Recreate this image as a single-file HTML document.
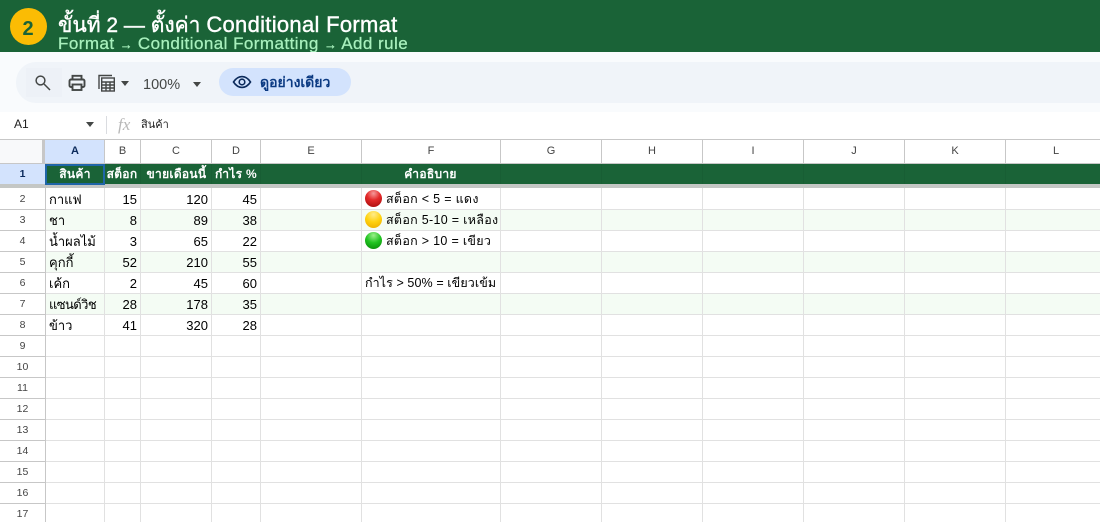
<!DOCTYPE html>
<html lang="th"><head><meta charset="utf-8"><title>Conditional Format</title>
<style>
*{box-sizing:border-box}
html,body{margin:0;padding:0;width:1100px;height:522px;overflow:hidden;background:#fff;font-family:"Liberation Sans","Noto Sans CJK SC",sans-serif}
.a{position:absolute;white-space:nowrap}
.v{position:absolute;width:1px;background:#e1e1e1;top:188px;height:334px}
.h{position:absolute;left:45px;width:1055px;height:1px;background:#e1e1e1}
.rl{position:absolute;left:0;width:45px;height:1px;background:#c7c7c7}
.cv{position:absolute;top:139px;height:25px;width:1px;background:#c7c7c7}
.gv{position:absolute;top:164px;height:20px;width:1px;background:#185e34}
.ch{position:absolute;top:140px;height:23px;line-height:23px;text-align:center;font-size:11px;color:#444;padding-left:1px}
.rn{position:absolute;left:0;width:45px;text-align:center;font-size:10.5px;color:#444;height:21px;line-height:22px}
.g{position:absolute;left:45px;width:1055px;height:20px;background:#f4fcf4}
.t{position:absolute;font-size:13px;color:#000;height:20px;line-height:21px;white-space:nowrap}
.r{text-align:right}
.hd{position:absolute;top:164px;height:20px;line-height:20px;font-size:12px;font-weight:bold;color:#fff;text-align:center;white-space:nowrap;letter-spacing:.3px}
.dot{position:absolute;left:365px;width:17px;height:17px;border-radius:50%}
</style></head><body>

<div class="a" style="left:0;top:0;width:1100px;height:52px;background:#1a6337"></div>
<div class="a" style="left:10px;top:8px;width:37px;height:37px;border-radius:50%;background:#fbbc04;color:#1a6337;font-size:20px;font-weight:bold;text-align:center;line-height:43px;padding-right:1px">2</div>
<div class="a" style="left:58px;top:10px;font-size:21px;line-height:30px;color:#fff;-webkit-text-stroke:.4px #fff">ขั้นที่ 2 — ตั้งค่า <span style="font-size:22px;letter-spacing:.3px">Conditional Format</span></div>
<div class="a" style="left:58px;top:34px;font-size:17px;line-height:20px;color:#a8f0bd;letter-spacing:.45px;-webkit-text-stroke:.25px #a8f0bd">Format <span style="font-size:13px;letter-spacing:0">→</span> Conditional Formatting <span style="font-size:13px;letter-spacing:0">→</span> Add rule</div>

<div class="a" style="left:0;top:52px;width:1100px;height:60px;background:#f9fbfd"></div>
<div class="a" style="left:16px;top:62px;width:1100px;height:41px;background:#f0f4f9;border-radius:20px 0 0 20px"></div>
<div class="a" style="left:26px;top:68px;width:36px;height:29px;background:#edf1f7"></div>
<svg class="a" style="left:31px;top:71px" width="22" height="22" viewBox="0 0 22 22" fill="none" stroke="#444746" stroke-width="1.500"><circle cx="9.500" cy="9.500" r="4.400"/><path d="M13 13l6 6"/></svg>
<svg class="a" style="left:66px;top:72px" width="22" height="22" viewBox="0 0 22 22" fill="none" stroke="#444746" stroke-width="1.900"><path d="M6.500 7V3.800h9V7"/><rect x="3.500" y="7.500" width="15" height="7.500" rx="1.500"/><rect x="6.500" y="12.500" width="9" height="5.500" fill="#f0f4f9"/></svg>
<svg class="a" style="left:96px;top:72px" width="22" height="22" viewBox="0 0 22 22" fill="none" stroke="#444746" stroke-width="1.400"><path d="M3 17V3.500h13"/><rect x="5.700" y="6" width="12.600" height="13"/><path d="M5.700 10h12.600M5.700 13h12.600M5.700 16h12.600M10 10v9M14 10v9"/></svg>
<div class="a" style="left:121px;top:80.500px;border:4px solid transparent;border-top:5px solid #444746"></div>
<div class="a" style="left:143px;top:76px;font-size:14.500px;line-height:18px;color:#444746">100%</div>
<div class="a" style="left:193px;top:82px;border:4px solid transparent;border-top:5px solid #444746"></div>
<div class="a" style="left:219px;top:68px;width:132px;height:28px;border-radius:14px;background:#d3e3fd"></div>
<svg class="a" style="left:232px;top:72px" width="20" height="20" viewBox="0 0 20 20" fill="none" stroke="#0b2a5b" stroke-width="1.600"><path d="M1.500 10C4 6.200 6.800 4.600 10 4.600S16 6.200 18.500 10C16 13.800 13.200 15.400 10 15.400S4 13.800 1.500 10z"/><circle cx="10" cy="10" r="2.800"/></svg>
<div class="a" style="left:260px;top:73px;font-size:14px;line-height:18px;font-weight:bold;color:#0b3a82">ดูอย่างเดียว</div>

<div class="a" style="left:14px;top:117px;font-size:12px;line-height:15px;color:#1f1f1f">A1</div>
<div class="a" style="left:86px;top:122px;border:4px solid transparent;border-top:5px solid #444746"></div>
<div class="a" style="left:106px;top:116px;width:1px;height:18px;background:#dadce0"></div>
<div class="a" style="left:118px;top:115px;font-family:'Liberation Serif',serif;font-style:italic;font-size:17px;line-height:20px;color:#b8b8b8">fx</div>
<div class="a" style="left:141px;top:117px;font-size:11px;line-height:16px;color:#1f1f1f">สินค้า</div>

<div class="a" style="left:0;top:139px;width:1100px;height:1px;background:#c7c7c7"></div>
<div class="a" style="left:0;top:140px;width:42px;height:23px;background:#f8f9fa"></div>
<div class="a" style="left:45px;top:140px;width:59px;height:23px;background:#d3e3fd"></div>
<div class="a" style="left:0;top:164px;width:45px;height:20px;background:#d3e3fd"></div>
<div class="a" style="left:42px;top:139px;width:3px;height:25px;background:#c7c7c7"></div>
<div class="a" style="left:0;top:163px;width:1100px;height:1px;background:#c7c7c7"></div>
<div class="cv" style="left:104px"></div><div class="cv" style="left:140px"></div><div class="cv" style="left:211px"></div><div class="cv" style="left:260px"></div><div class="cv" style="left:361px"></div><div class="cv" style="left:500px"></div><div class="cv" style="left:601px"></div><div class="cv" style="left:702px"></div><div class="cv" style="left:803px"></div><div class="cv" style="left:904px"></div><div class="cv" style="left:1005px"></div>
<div class="ch" style="left:45px;width:59px;font-weight:bold;color:#0b2a5b">A</div>
<div class="ch" style="left:104px;width:36px">B</div>
<div class="ch" style="left:140px;width:71px">C</div>
<div class="ch" style="left:211px;width:49px">D</div>
<div class="ch" style="left:260px;width:101px">E</div>
<div class="ch" style="left:361px;width:139px">F</div>
<div class="ch" style="left:500px;width:101px">G</div>
<div class="ch" style="left:601px;width:101px">H</div>
<div class="ch" style="left:702px;width:101px">I</div>
<div class="ch" style="left:803px;width:101px">J</div>
<div class="ch" style="left:904px;width:101px">K</div>
<div class="ch" style="left:1005px;width:101px">L</div>

<div class="a" style="left:45px;top:164px;width:1055px;height:20px;background:#1a6337"></div>
<div class="gv" style="left:104px"></div><div class="gv" style="left:140px"></div><div class="gv" style="left:211px"></div><div class="gv" style="left:260px"></div><div class="gv" style="left:361px"></div><div class="gv" style="left:500px"></div><div class="gv" style="left:601px"></div><div class="gv" style="left:702px"></div><div class="gv" style="left:803px"></div><div class="gv" style="left:904px"></div><div class="gv" style="left:1005px"></div>
<div class="a" style="left:0;top:184px;width:1100px;height:4px;background:#c4c7c5"></div>
<div class="a" style="left:45px;top:164px;width:60px;height:21px;border:2px solid #1f66a8"></div>
<div class="hd" style="left:45px;width:60px">สินค้า</div>
<div class="hd" style="left:104px;width:36px">สต็อก</div>
<div class="hd" style="left:140px;width:73px">ขายเดือนนี้</div>
<div class="hd" style="left:211px;width:50px">กำไร %</div>
<div class="hd" style="left:361px;width:139px">คำอธิบาย</div>

<div class="g" style="top:210px"></div><div class="g" style="top:252px"></div><div class="g" style="top:294px"></div>
<div class="h" style="top:209px"></div><div class="h" style="top:230px"></div><div class="h" style="top:251px"></div><div class="h" style="top:272px"></div><div class="h" style="top:293px"></div><div class="h" style="top:314px"></div><div class="h" style="top:335px"></div><div class="h" style="top:356px"></div><div class="h" style="top:377px"></div><div class="h" style="top:398px"></div><div class="h" style="top:419px"></div><div class="h" style="top:440px"></div><div class="h" style="top:461px"></div><div class="h" style="top:482px"></div><div class="h" style="top:503px"></div>
<div class="v" style="left:104px"></div><div class="v" style="left:140px"></div><div class="v" style="left:211px"></div><div class="v" style="left:260px"></div><div class="v" style="left:361px"></div><div class="v" style="left:500px"></div><div class="v" style="left:601px"></div><div class="v" style="left:702px"></div><div class="v" style="left:803px"></div><div class="v" style="left:904px"></div><div class="v" style="left:1005px"></div>
<div class="a" style="left:45px;top:188px;width:1px;height:334px;background:#c7c7c7"></div>
<div class="rl" style="top:209px"></div><div class="rl" style="top:230px"></div><div class="rl" style="top:251px"></div><div class="rl" style="top:272px"></div><div class="rl" style="top:293px"></div><div class="rl" style="top:314px"></div><div class="rl" style="top:335px"></div><div class="rl" style="top:356px"></div><div class="rl" style="top:377px"></div><div class="rl" style="top:398px"></div><div class="rl" style="top:419px"></div><div class="rl" style="top:440px"></div><div class="rl" style="top:461px"></div><div class="rl" style="top:482px"></div><div class="rl" style="top:503px"></div>

<div class="rn" style="top:163px;font-weight:bold;color:#0b2a5b">1</div>
<div class="rn" style="top:188px">2</div><div class="rn" style="top:209px">3</div><div class="rn" style="top:230px">4</div><div class="rn" style="top:251px">5</div><div class="rn" style="top:272px">6</div><div class="rn" style="top:293px">7</div><div class="rn" style="top:314px">8</div><div class="rn" style="top:335px">9</div><div class="rn" style="top:356px">10</div><div class="rn" style="top:377px">11</div><div class="rn" style="top:398px">12</div><div class="rn" style="top:419px">13</div><div class="rn" style="top:440px">14</div><div class="rn" style="top:461px">15</div><div class="rn" style="top:482px">16</div><div class="rn" style="top:503px">17</div>

<div class="t" style="left:49px;top:189px">กาแฟ</div><div class="t r" style="left:104px;width:33px;top:189px">15</div><div class="t r" style="left:140px;width:68px;top:189px">120</div><div class="t r" style="left:211px;width:46px;top:189px">45</div>
<div class="t" style="left:49px;top:210px">ชา</div><div class="t r" style="left:104px;width:33px;top:210px">8</div><div class="t r" style="left:140px;width:68px;top:210px">89</div><div class="t r" style="left:211px;width:46px;top:210px">38</div>
<div class="t" style="left:49px;top:231px">น้ำผลไม้</div><div class="t r" style="left:104px;width:33px;top:231px">3</div><div class="t r" style="left:140px;width:68px;top:231px">65</div><div class="t r" style="left:211px;width:46px;top:231px">22</div>
<div class="t" style="left:49px;top:252px">คุกกี้</div><div class="t r" style="left:104px;width:33px;top:252px">52</div><div class="t r" style="left:140px;width:68px;top:252px">210</div><div class="t r" style="left:211px;width:46px;top:252px">55</div>
<div class="t" style="left:49px;top:273px">เค้ก</div><div class="t r" style="left:104px;width:33px;top:273px">2</div><div class="t r" style="left:140px;width:68px;top:273px">45</div><div class="t r" style="left:211px;width:46px;top:273px">60</div>
<div class="t" style="left:49px;top:294px;letter-spacing:-.6px">แซนด์วิช</div><div class="t r" style="left:104px;width:33px;top:294px">28</div><div class="t r" style="left:140px;width:68px;top:294px">178</div><div class="t r" style="left:211px;width:46px;top:294px">35</div>
<div class="t" style="left:49px;top:315px">ข้าว</div><div class="t r" style="left:104px;width:33px;top:315px">41</div><div class="t r" style="left:140px;width:68px;top:315px">320</div><div class="t r" style="left:211px;width:46px;top:315px">28</div>

<div class="dot" style="top:190px;background:radial-gradient(circle at 50% 20%,#f59a9a 0,#e42a2a 42%,#b01010 85%,#8f0c0c 100%)"></div>
<div class="dot" style="top:211px;background:radial-gradient(circle at 50% 20%,#ffec8a 0,#ffd20f 48%,#f0b400 85%,#d99e00 100%)"></div>
<div class="dot" style="top:232px;background:radial-gradient(circle at 50% 20%,#9bf08a 0,#22c422 46%,#0c950c 85%,#0a7a0a 100%)"></div>
<div class="t" style="left:386px;top:189px;font-size:12.500px;letter-spacing:.3px">สต็อก &lt; 5 = แดง</div>
<div class="t" style="left:386px;top:210px;font-size:12.500px;letter-spacing:.3px">สต็อก 5-10 = เหลือง</div>
<div class="t" style="left:386px;top:231px;font-size:12.500px;letter-spacing:.3px">สต็อก &gt; 10 = เขียว</div>
<div class="t" style="left:365px;top:273px;font-size:12.500px;letter-spacing:.1px">กำไร &gt; 50% = เขียวเข้ม</div>
</body></html>
